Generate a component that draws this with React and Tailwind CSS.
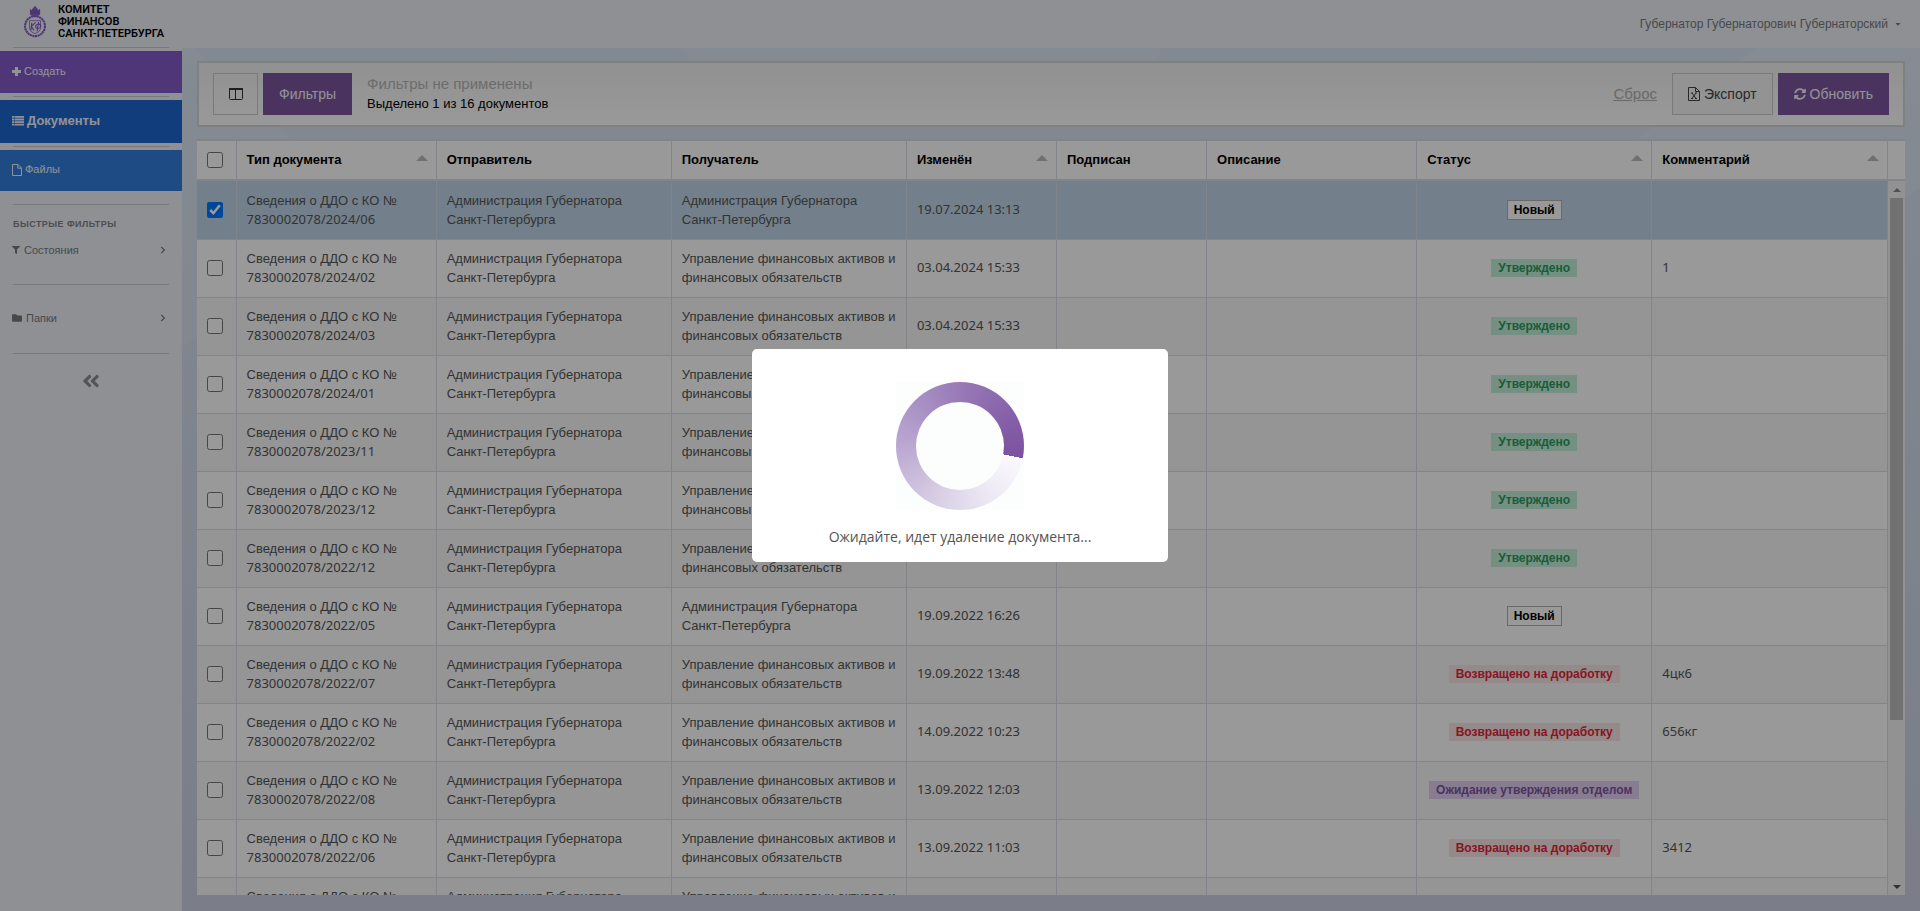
import React from "react";
import { FaFilter, FaFolder, FaChevronRight, FaAngleDoubleLeft, FaCaretDown, FaSyncAlt } from "react-icons/fa";

const ADMIN = ["Администрация Губернатора", "Санкт-Петербурга"];
const UPR = ["Управление финансовых активов и", "финансовых обязательств"];
const STATUS = {
  new: ["Новый", "border-[#b0b0b0] bg-white leading-[18px] text-black"],
  ok: ["Утверждено", "border-[#c3f0d9] bg-[#c3f0d9] leading-4 text-[#2b9a5c]"],
  back: ["Возвращено на доработку", "border-[#fbe4e4] bg-[#fbe4e4] leading-4 text-[#e02638]"],
  wait: ["Ожидание утверждения отделом", "border-[#e2cff0] bg-[#e2cff0] leading-4 text-[#7d56a1]"],
};
const rows = [
  ["2024/06", ADMIN, "19.07.2024 13:13", "new", ""],
  ["2024/02", UPR, "03.04.2024 15:33", "ok", "1"],
  ["2024/03", UPR, "03.04.2024 15:33", "ok", ""],
  ["2024/01", UPR, "03.04.2024 15:32", "ok", ""],
  ["2023/11", UPR, "12.12.2023 10:20", "ok", ""],
  ["2023/12", UPR, "12.12.2023 10:18", "ok", ""],
  ["2022/12", UPR, "09.02.2023 11:18", "ok", ""],
  ["2022/05", ADMIN, "19.09.2022 16:26", "new", ""],
  ["2022/07", UPR, "19.09.2022 13:48", "back", "4цк6"],
  ["2022/02", UPR, "14.09.2022 10:23", "back", "656кг"],
  ["2022/08", UPR, "13.09.2022 12:03", "wait", ""],
  ["2022/06", UPR, "13.09.2022 11:03", "back", "3412"],
  ["2022/04", UPR, "13.09.2022 10:41", "back", ""],
];
const columns = [
  ["Тип документа", true],
  ["Отправитель", false],
  ["Получатель", false],
  ["Изменён", true],
  ["Подписан", false],
  ["Описание", false],
  ["Статус", true],
  ["Комментарий", true],
];

const cell = "border-l border-[#d8dde3] px-[10px]";
const digits = "font-['Noto_Sans',sans-serif]";

function PlusIcon() {
  return (
    <svg viewBox="0 0 9 9" className="size-[9px]" fill="currentColor"><path d="M3 0h3v3h3v3H6v3H3V6H0V3h3z" /></svg>
  );
}

function ListIcon() {
  return (
    <svg viewBox="0 0 12 10" className="h-[10px] w-3" fill="currentColor">
      <path d="M0 0h2v1.800H0zM2.500 0H12v1.800H2.500zM0 2.600h2v1.800H0zM2.500 2.600H12v1.800H2.500zM0 5.200h2V7H0zM2.500 5.200H12V7H2.500zM0 7.800h2v1.800H0zM2.500 7.800H12v1.800H2.500z" />
    </svg>
  );
}

function FileIcon() {
  return (
    <svg viewBox="0 0 10 12" className="h-3 w-[10px]" fill="none" stroke="currentColor"><path d="M.5.5h5.500l3.500 3.500v7.500h-9zM5.800.5v3.700h3.700" /></svg>
  );
}

function ExcelIcon() {
  return (
    <svg viewBox="0 0 12 14" className="h-[14px] w-3" fill="none" stroke="currentColor">
      <path d="M.5.5h7l4 4v9H.5zM7.500.5v4h4" />
      <path d="M4 6l4 5.500M8 6l-4 5.500M3 6h2M7 6h2M3 11.500h2M7 11.500h2" />
    </svg>
  );
}

function ColumnsIcon() {
  return (
    <svg viewBox="0 0 14 12" className="h-3 w-[14px]" fill="none" stroke="currentColor">
      <rect x=".5" y=".5" width="13" height="11" rx="1" />
      <path d="M0 1h14" strokeWidth="2" />
      <path d="M6.500 1v11" />
    </svg>
  );
}

function Cols() {
  return (
    <colgroup>
      <col className="w-[39px]" />
      <col className="w-[200px]" />
      <col className="w-[235px]" />
      <col className="w-[235px]" />
      <col className="w-[150px]" />
      <col className="w-[150px]" />
      <col className="w-[210px]" />
      <col className="w-[235px]" />
      <col className="w-[235px]" />
    </colgroup>
  );
}

function Check({ label, checked }) {
  return <input type="checkbox" aria-label={label} defaultChecked={checked} className="ml-[10px] block size-4" />;
}

function Emblem() {
  return (
    <svg viewBox="0 0 26 34" className="h-8 w-6 shrink-0" fill="none" stroke="#8258c0">
      <circle cx="13" cy="21.500" r="10.800" strokeWidth="2.200" strokeDasharray="2.400 .5" />
      <path d="M7 15.500h12v8c0 3-3 5-6 6-3-1-6-3-6-6z" strokeWidth=".8" />
      <path d="M9.500 18l-1 8M13.500 17.500l-4.500 4.500 3 4M16.800 17l-1.500 10M15.500 19.500c-2.500 1-2.500 4.500.5 4.500 3.500 0 4.500-4 1-5" strokeWidth="1.200" />
      <path d="M8 3.500l2 1.500 1-3 2 2 2-2 1 3 2-1.500V9H8z" fill="#8258c0" />
      <path d="M13 0v4M11.500 1.500h3M9 10.500h8" strokeWidth="1.500" />
    </svg>
  );
}

function Sidebar() {
  const line = "mx-[13px] h-px bg-[#c6c8ce]";
  const item = "flex w-full items-center gap-[3px] px-3 pb-[2px] text-left text-[#f4f4f8]";
  return (
    <aside className="flex w-[182px] shrink-0 flex-col bg-[#edf0f7]">
      <a href="#home" className="flex h-[47px] items-center gap-2 pb-1 pl-[23px]">
        <Emblem />
        <span className="pl-[3px] font-['Roboto',sans-serif] text-[11px] leading-3 font-semibold whitespace-nowrap text-black">
          КОМИТЕТ<br />ФИНАНСОВ<br />САНКТ-ПЕТЕРБУРГА
        </span>
      </a>
      <div className={line} />
      <button className={`${item} mt-[3px] h-[42px] bg-[#845bca] text-[11px]`}><PlusIcon />Создать</button>
      <div className={`${line} mt-[3px]`} />
      <a href="#documents" className={`${item} mt-[3px] h-[43px] bg-[#1d66d0] text-[13px] font-bold`}><ListIcon />Документы</a>
      <div className={`${line} mt-[3px]`} />
      <a href="#files" className={`${item} mt-[3px] h-[41px] bg-[#357edd] text-[11px]`}><FileIcon />Файлы</a>
      <div className={`${line} mt-[13px]`} />
      <h2 className="mt-[11px] px-[13px] text-[9px] leading-4 font-bold tracking-wider whitespace-nowrap text-[#808387]">БЫСТРЫЕ ФИЛЬТРЫ</h2>
      <button className="mt-2 flex h-5 items-center gap-1 px-3 text-[11px] text-[#77797d]">
        <FaFilter className="size-2" />Состояния<FaChevronRight className="mr-[3px] ml-auto size-2" />
      </button>
      <div className={`${line} mt-6`} />
      <button className="mt-[23px] flex h-5 items-center gap-1 px-3 text-[11px] text-[#77797d]">
        <FaFolder className="size-[10px]" />Папки<FaChevronRight className="mr-[3px] ml-auto size-2" />
      </button>
      <div className={`${line} mt-[25px]`} />
      <button aria-label="Свернуть меню" className="mx-auto mt-[17px] text-[#898d92]"><FaAngleDoubleLeft className="size-5" /></button>
    </aside>
  );
}

function Backdrop() {
  return (
    <svg aria-hidden="true" viewBox="0 0 1738 863" preserveAspectRatio="none" className="absolute inset-0 size-full">
      <path d="M0 0H12L110 92 180 160 0 300z" fill="#fff" fillOpacity=".12" />
      <path d="M500 0H980L950 60H540z" fill="#fff" fillOpacity=".14" />
      <path d="M1575 0H1738V140L1500 300 1450 95z" fill="#fff" fillOpacity=".16" />
    </svg>
  );
}

function Dialog() {
  return (
    <div className="absolute inset-0 flex items-center justify-center bg-black/40">
      <div role="dialog" aria-label="Удаление документа" className="w-[416px] rounded-[5px] bg-white pt-[33px] pb-[13px]">
        <div className="mx-auto size-32 bg-[#fcfefd]">
          <div className="flex size-full items-center justify-center rounded-full bg-[conic-gradient(from_101deg,#fbf9fe,#eeebf5_12%,#d9cfe5_28%,#b9a6d0_48%,#9a7db9_70%,#8661a9_88%,#7b529f)]">
            <div className="size-[88px] rounded-full bg-[#fcfefd]" />
          </div>
        </div>
        <p className="mt-[15px] text-center font-['Open_Sans',sans-serif] text-sm leading-6 text-[#545454]">Ожидайте, идет удаление документа...</p>
      </div>
    </div>
  );
}

export default function App() {
  return (
    <div className="relative flex h-screen overflow-hidden bg-[#edf0f7] font-['Liberation_Sans',sans-serif] text-[#555]">
      <Sidebar />
      <div className="flex min-w-0 flex-1 flex-col">
        <header className="flex h-12 shrink-0 items-center justify-end px-[18px]">
          <button className="flex items-center gap-[6px] text-xs text-[#77797d]">
            Губернатор Губернаторович Губернаторский <FaCaretDown className="size-2" />
          </button>
        </header>
        <main className="relative min-h-0 flex-1 bg-linear-to-b from-[#d9e5f3] to-[#cdd2e4]">
          <Backdrop />
          <div className="relative flex h-full flex-col gap-3 px-[15px] pt-[13px] pb-4">
            <section className="flex h-[66px] shrink-0 items-center border-2 border-[#d3d7dd] bg-linear-to-b from-[#f2f2f2] to-white px-[14px] text-sm">
              <button aria-label="Столбцы" className="flex h-[42px] w-[45px] items-center justify-center border border-[#ccc] text-[#333]"><ColumnsIcon /></button>
              <button className="ml-[5px] h-[42px] bg-[#7d56a1] px-4 text-[#f4f4f8]">Фильтры</button>
              <div className="ml-[15px]">
                <p className="text-[15px] leading-5 text-[#b5b5b5]">Фильтры не применены</p>
                <p className="text-[13px] leading-5 text-black">Выделено 1 из 16 документов</p>
              </div>
              <button className="ml-auto text-[15px] text-[#b0b0b0] underline">Сброс</button>
              <button className="ml-[15px] flex h-[42px] items-center gap-1 border border-[#ccc] bg-[#f5f5f5] px-[15px] text-[#444]"><ExcelIcon />Экспорт</button>
              <button className="ml-[5px] flex h-[42px] items-center gap-1 bg-[#7d56a1] px-4 text-[#f4f4f8]"><FaSyncAlt className="size-3" />Обновить</button>
            </section>
            <section className="flex min-h-0 flex-1 flex-col bg-white text-[13px]">
              <div className="flex border-y-2 border-[#d8dde3]">
                <table className="w-full table-fixed">
                  <Cols />
                  <thead>
                    <tr className="h-[38px]">
                      <th><Check label="Выбрать все" /></th>
                      {columns.map(([name, sort]) => (
                        <th key={name} className="border-l border-[#d8dde3] pr-2 pl-[10px] text-left font-bold text-black">
                          <span className="flex items-center justify-between">
                            {name}
                            {sort && <svg viewBox="0 0 12 6" className="mb-1 h-[6px] w-3 shrink-0" fill="#bbb"><path d="M0 6l6-6 6 6z" /></svg>}
                          </span>
                        </th>
                      ))}
                    </tr>
                  </thead>
                </table>
                <div className="w-[18px] shrink-0 border-l border-[#d8dde3]" />
              </div>
              <div className="flex min-h-0 flex-1">
                <div className="min-w-0 flex-1 overflow-hidden">
                  <table className="w-full table-fixed">
                    <Cols />
                    <tbody>
                      {rows.map(([num, to, date, st, note], i) => (
                        <tr key={num} className={`h-[58px] border-b border-[#d8dde3] ${i === 0 ? "bg-[#c0d5e8]" : i % 2 ? "bg-white" : "bg-[#f8f8f8]"}`}>
                          <td><Check label={num} checked={i === 0} /></td>
                          <td className={`${cell} leading-[19px]`}>
                            <span className="block">Сведения о ДДО с КО №</span>
                            <span className={`block ${digits}`}>{`7830002078/${num}`}</span>
                          </td>
                          <td className={`${cell} leading-[19px]`}>{ADMIN.map((t) => <span key={t} className="block">{t}</span>)}</td>
                          <td className={`${cell} leading-[19px] whitespace-nowrap`}>{to.map((t) => <span key={t} className="block">{t}</span>)}</td>
                          <td className={`${cell} ${digits}`}>{date}</td>
                          <td className={cell} />
                          <td className={cell} />
                          <td className={`${cell} text-center text-xs`}>
                            <span className={`inline-block border px-[6px] font-bold whitespace-nowrap ${STATUS[st][1]}`}>{STATUS[st][0]}</span>
                          </td>
                          <td className={`${cell} ${digits}`}>{note}</td>
                        </tr>
                      ))}
                    </tbody>
                  </table>
                </div>
                <div aria-hidden="true" className="flex w-[18px] flex-col items-center border-l border-[#d8dde3] bg-[#f3f3f3] pt-[7px] pb-[6px]">
                  <svg viewBox="0 0 8 4" className="h-1 w-2 shrink-0" fill="#888"><path d="M0 4l4-4 4 4z" /></svg>
                  <div className="mt-[6px] h-[522px] w-[13px] bg-[#bdbdbd]" />
                  <svg viewBox="0 0 8 4" className="mt-auto h-1 w-2 shrink-0" fill="#505050"><path d="M0 0l4 4 4-4z" /></svg>
                </div>
              </div>
            </section>
          </div>
        </main>
      </div>
      <Dialog />
    </div>
  );
}
